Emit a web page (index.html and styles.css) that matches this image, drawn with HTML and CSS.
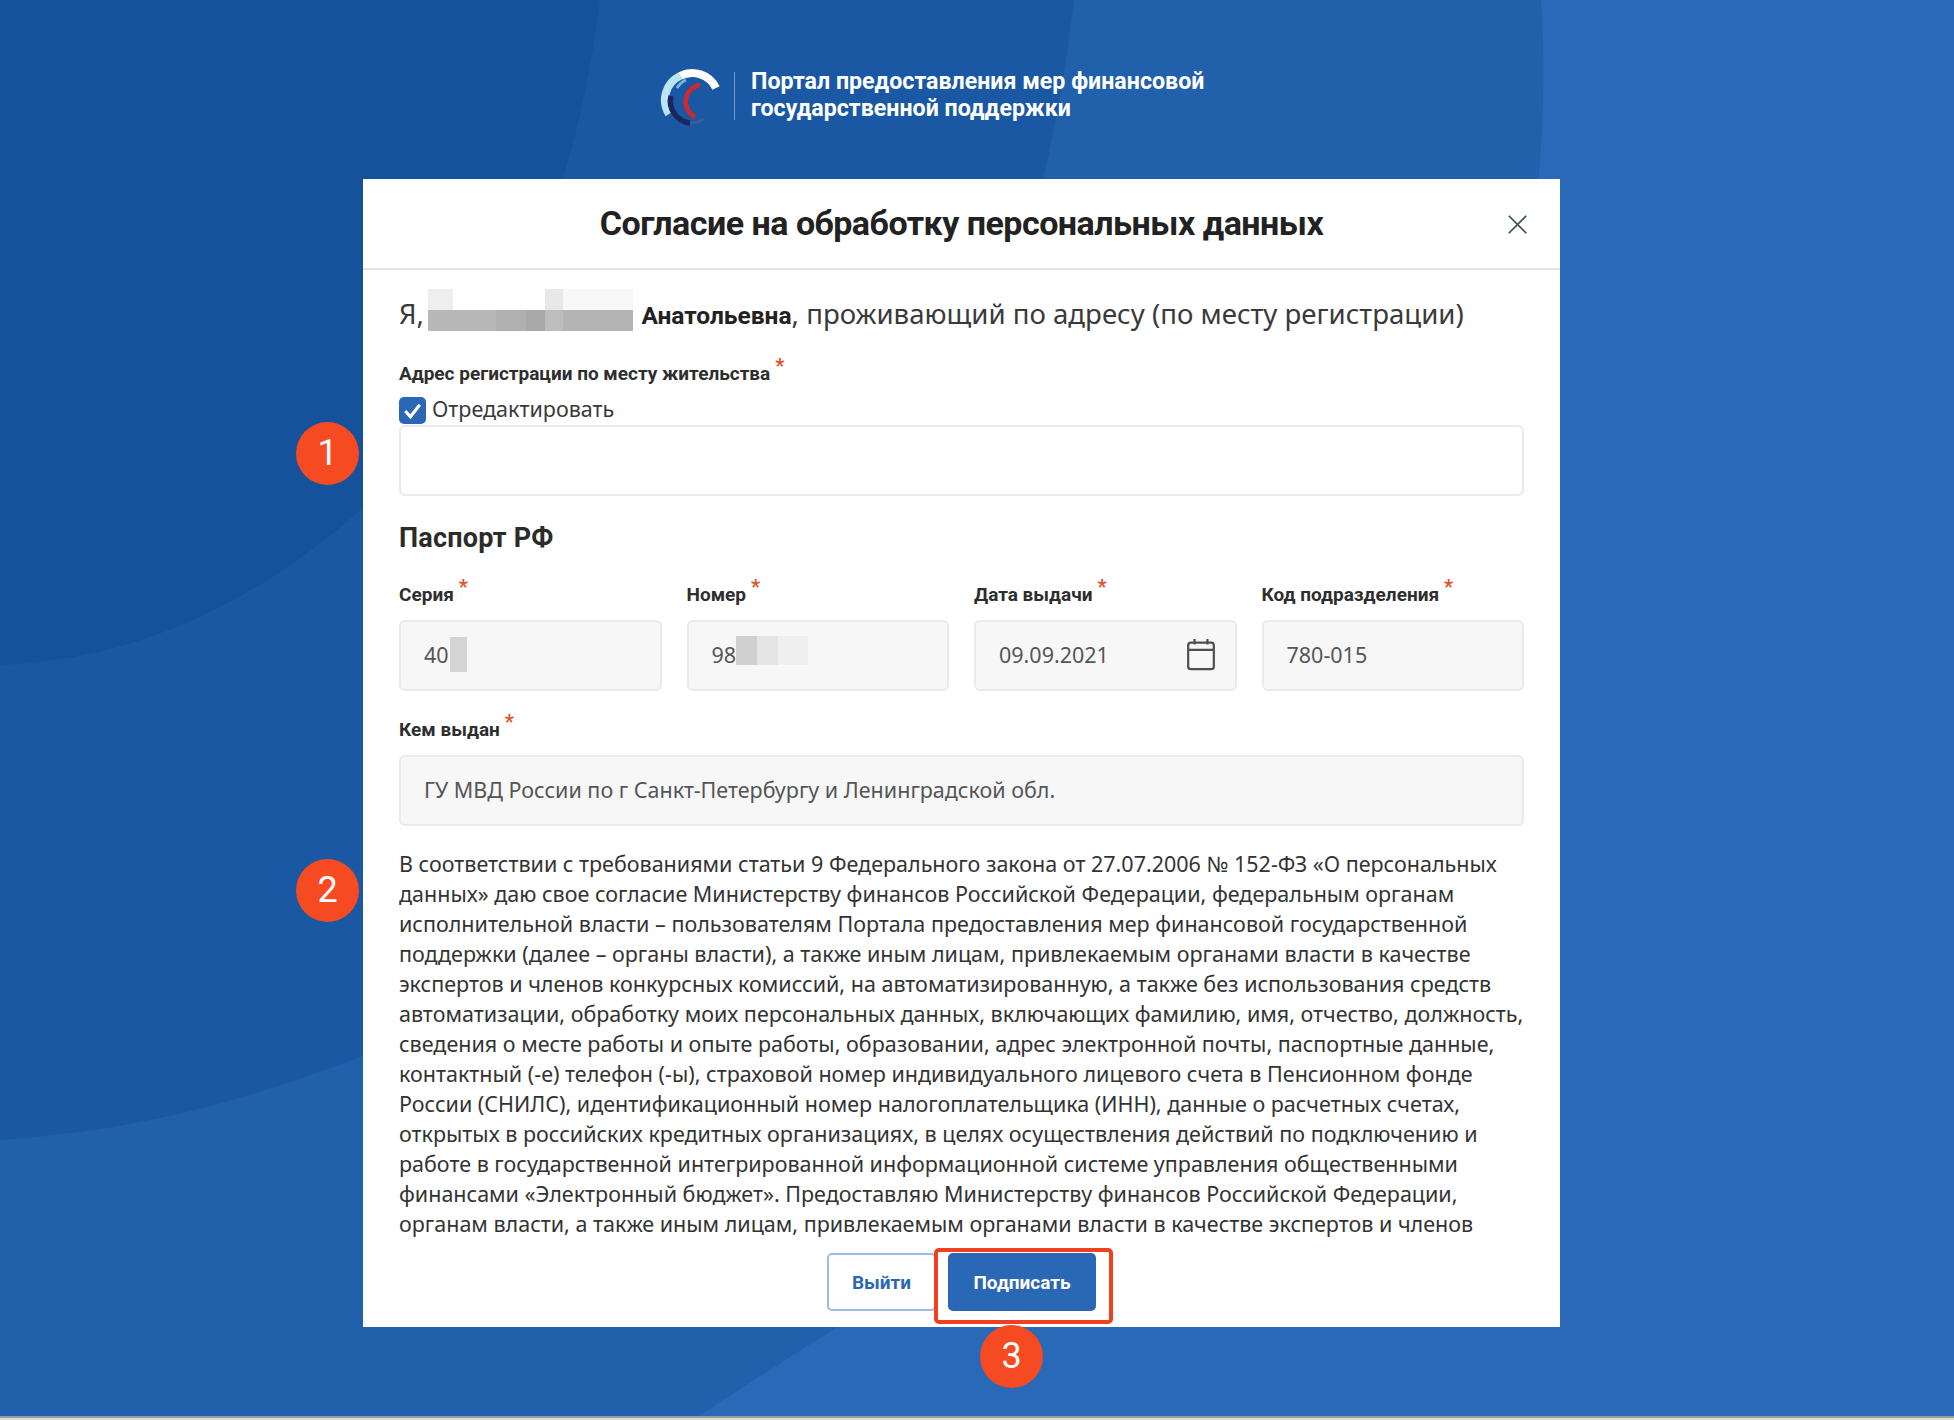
FILE: index.html
```html
<!DOCTYPE html>
<html lang="ru">
<head>
  <meta charset="utf-8">
  <title>Согласие на обработку персональных данных</title>
  <link rel="stylesheet" href="styles.css">
</head>
<body>

<svg class="bg" viewBox="0 0 1954 1420" preserveAspectRatio="none">
  <rect width="1954" height="1420" fill="#2a69b8"/>
  <path d="M0 0H1541C1575 500 1250 1050 837 1327L692 1420H0Z" fill="#2160ab"/>
  <path d="M0 0H1074C1010 550 700 930 363 1056C260 1095 150 1130 0 1140Z" fill="#1a58a3"/>
  <path d="M0 0H600C570 240 480 400 363 508C270 590 150 660 0 665Z" fill="#16519b"/>
</svg>

<header class="brand">
  <svg class="brand-logo" viewBox="10 10 64 60">
    <path d="M66 32A26.5 26.5 0 0 0 30 20" fill="none" stroke="#ffffff" stroke-width="8"/>
    <path d="M30 20A26.5 26.5 0 0 0 19 58" fill="none" stroke="#bde4f4" stroke-width="8"/>
    <path d="M36 24A20 20 0 0 0 27 32" fill="none" stroke="#6fb6e2" stroke-width="3"/>
    <path d="M50 29A17 17 0 0 0 45 61" fill="none" stroke="#d3272e" stroke-width="4.5"/>
    <path d="M21 40A22 22 0 0 0 40 67" fill="none" stroke="#1b2560" stroke-width="5.5"/>
    <path d="M40 67A24 24 0 0 0 54 63" fill="none" stroke="#3f5a95" stroke-width="3"/>
  </svg>
  <span class="brand-sep"></span>
  <div class="brand-text">Портал предоставления мер финансовой<br>государственной поддержки</div>
</header>

<main class="modal">
  <div class="modal-head">
    <h1>Согласие на обработку персональных данных</h1>
    <svg class="close" viewBox="0 0 24 24"><path d="M2 2L22 22M22 2L2 22" fill="none" stroke="#35505f" stroke-width="2"/></svg>
  </div>

  <div class="modal-body">
    <p class="intro">Я, <span class="blur-name"></span> <b>Анатольевна</b>, проживающий по адресу (по месту регистрации)</p>

    <label class="field-label address-label">Адрес регистрации по месту жительства<i>*</i></label>
    <div class="check-row">
      <span class="checkbox"><svg viewBox="0 0 26 26"><path d="M6 13.5L11 19L20 7.5" fill="none" stroke="#fff" stroke-width="3"/></svg></span>
      <span class="check-text">Отредактировать</span>
    </div>
    <div class="input input-white"></div>

    <h2>Паспорт РФ</h2>

    <div class="passport-grid">
      <div>
        <label class="field-label">Серия<i>*</i></label>
        <div class="input">40<span class="blur-digits short"></span></div>
      </div>
      <div>
        <label class="field-label">Номер<i>*</i></label>
        <div class="input">98<span class="blur-digits long"></span></div>
      </div>
      <div>
        <label class="field-label">Дата выдачи<i>*</i></label>
        <div class="input input-date">09.09.2021
          <svg class="calendar" viewBox="0 0 32 36">
            <rect x="2" y="5" width="28" height="29" rx="3" fill="none" stroke="#4f4f4f" stroke-width="2.4"/>
            <path d="M2 13H30M9 1V7M23 1V7" fill="none" stroke="#4f4f4f" stroke-width="2.4"/>
          </svg>
        </div>
      </div>
      <div>
        <label class="field-label">Код подразделения<i>*</i></label>
        <div class="input">780-015</div>
      </div>
    </div>

    <label class="field-label issued-label">Кем выдан<i>*</i></label>
    <div class="input">ГУ МВД России по г Санкт-Петербургу и Ленинградской обл.</div>

    <div class="consent">
      В соответствии с требованиями статьи 9 Федерального закона от 27.07.2006 № 152-ФЗ «О персональных<br>
      данных» даю свое согласие Министерству финансов Российской Федерации, федеральным органам<br>
      исполнительной власти – пользователям Портала предоставления мер финансовой государственной<br>
      поддержки (далее – органы власти), а также иным лицам, привлекаемым органами власти в качестве<br>
      экспертов и членов конкурсных комиссий, на автоматизированную, а также без использования средств<br>
      автоматизации, обработку моих персональных данных, включающих фамилию, имя, отчество, должность,<br>
      сведения о месте работы и опыте работы, образовании, адрес электронной почты, паспортные данные,<br>
      контактный (-е) телефон (-ы), страховой номер индивидуального лицевого счета в Пенсионном фонде<br>
      России (СНИЛС), идентификационный номер налогоплательщика (ИНН), данные о расчетных счетах,<br>
      открытых в российских кредитных организациях, в целях осуществления действий по подключению и<br>
      работе в государственной интегрированной информационной системе управления общественными<br>
      финансами «Электронный бюджет». Предоставляю Министерству финансов Российской Федерации,<br>
      органам власти, а также иным лицам, привлекаемым органами власти в качестве экспертов и членов
    </div>

    <div class="actions">
      <button type="button" class="btn btn-outline">Выйти</button>
      <button type="button" class="btn btn-primary">Подписать</button>
    </div>
  </div>
</main>

<div class="bottom-line"></div>

<!-- annotation marks lying over the page -->
<span class="mark mark-1">1</span>
<span class="mark mark-2">2</span>
<span class="mark mark-3">3</span>
<span class="mark-frame"></span>

</body>
</html>
```

FILE: styles.css
```css
html, body {
  margin: 0;
  height: 100%;
}
body {
  position: relative;
  width: 1954px;
  height: 1420px;
  overflow: hidden;
  font-family: "Noto Sans", Arial, sans-serif;
  color: #2b2b2b;
  background-color: #2a69b8;
}
.bg {
  position: absolute;
  left: 0;
  top: 0;
  width: 1954px;
  height: 1420px;
}
.bottom-line {
  position: absolute;
  left: 0;
  right: 0;
  bottom: 0;
  height: 4px;
  box-sizing: border-box;
  border-top: 2px solid #9a9a9a;
  background-color: #dddddd;
}

.brand {
  position: relative;
  display: flex;
  align-items: center;
  height: 179px;
  padding-left: 660px;
  box-sizing: border-box;
  padding-top: 12px;
}
.brand-logo {
  width: 64px;
  height: 60px;
}
.brand-sep {
  width: 1px;
  height: 48px;
  margin: 0 16px 0 10px;
  background-color: rgba(255, 255, 255, 0.4);
}
.brand-text {
  margin-top: -1px;
  color: #fff;
  font-family: Roboto, Arial, sans-serif;
  font-size: 23.2px;
  font-weight: 700;
  line-height: 27px;
  white-space: nowrap;
}

.modal {
  position: relative;
  width: 1197px;
  height: 1148px;
  margin-left: 363px;
  background-color: #fff;
}
.modal-head {
  display: flex;
  align-items: center;
  justify-content: center;
  position: relative;
  height: 91px;
  padding-bottom: 2px;
  border-bottom: 2px solid #e3e7ec;
  box-sizing: border-box;
}
.modal-head h1 {
  margin: 0;
  font-family: Roboto, Arial, sans-serif;
  font-size: 34px;
  font-weight: 700;
  letter-spacing: -0.5px;
  color: #222;
}
.close {
  position: absolute;
  right: 32px;
  top: 35px;
  width: 21px;
  height: 21px;
}
.modal-body {
  padding: 0 36px;
}
.intro {
  margin: 19px 0 0;
  height: 42px;
  line-height: 49px;
  font-size: 27.6px;
  color: #3a3a3a;
  white-space: nowrap;
}
.intro b {
  margin-left: 1px;
  font-family: Roboto, Arial, sans-serif;
  font-size: 24.5px;
  color: #222;
}
.blur-name {
  display: inline-block;
  vertical-align: top;
  width: 205px;
  height: 42px;
  margin-left: -3px;
  background:
    linear-gradient(90deg, #eeeeee 0 12%, #ffffff 12% 57%, #e8e8e8 57% 66%, #f8f8f8 66% 100%) top / 100% 50% no-repeat,
    linear-gradient(90deg, #b8b8b8 0 33%, #b0b0b0 33% 48%, #a9a9a9 48% 57%, #bdbdbd 57% 66%, #b4b4b4 66% 100%) bottom / 100% 50% no-repeat;
}
.field-label {
  display: block;
  font-family: Roboto, Arial, sans-serif;
  font-size: 19px;
  font-weight: 700;
  color: #2e2e2e;
  line-height: 24px;
}
.field-label i {
  position: relative;
  top: -7px;
  margin-left: 5px;
  font-style: normal;
  font-weight: 700;
  font-size: 20px;
  line-height: 0;
  color: #e0522c;
}
.address-label {
  margin-top: 31px;
}
.check-row {
  display: flex;
  align-items: center;
  gap: 6px;
  height: 27px;
  margin-top: 11px;
  font-size: 21.5px;
  color: #3a3a3a;
}
.check-text {
  margin-bottom: 5px;
}
.checkbox {
  width: 27px;
  height: 27px;
  border-radius: 5px;
  background-color: #2a67b5;
}
.checkbox svg {
  display: block;
}
.input {
  display: flex;
  align-items: center;
  height: 71px;
  box-sizing: border-box;
  padding: 0 23px 2px;
  border: 2px solid #e8eaee;
  border-radius: 6px;
  background-color: #f7f7f8;
  font-size: 21.5px;
  color: #555;
}
.input-white {
  margin-top: 1px;
  background-color: #fff;
}
.input-date {
  justify-content: space-between;
  padding-right: 19px;
}
.calendar {
  width: 30px;
  height: 33px;
}
.blur-digits {
  display: inline-block;
}
.blur-digits.short {
  width: 17px;
  height: 35px;
  margin-left: 1px;
  background-color: #d4d4d4;
}
.blur-digits.long {
  width: 72px;
  height: 29px;
  margin-bottom: 8px;
  background: linear-gradient(90deg, #cfcfcf 0 29%, #e4e4e4 29% 58%, #efefef 58% 100%);
}
h2 {
  margin: 24px 0 0;
  height: 36px;
  line-height: 36px;
  font-family: Roboto, Arial, sans-serif;
  font-size: 27px;
  font-weight: 700;
  letter-spacing: 0.2px;
  color: #2b2b2b;
}
.passport-grid {
  display: grid;
  grid-template-columns: repeat(4, 1fr);
  gap: 25px;
  margin-top: 27px;
}
.passport-grid .field-label {
  margin-bottom: 13px;
}
.issued-label {
  margin: 27px 0 13px;
}
.consent {
  margin: 23px -20px 0 0;
  height: 390px;
  overflow: hidden;
  font-size: 21.5px;
  line-height: 30px;
  color: #333;
  white-space: nowrap;
}
.actions {
  display: flex;
  justify-content: center;
  gap: 12px;
  margin-top: 14px;
}
.btn {
  height: 58px;
  box-sizing: border-box;
  border-radius: 5px;
  font-family: Roboto, Arial, sans-serif;
  font-size: 19px;
  font-weight: 700;
}
.btn-outline {
  width: 109px;
  border: 2px solid #9dbce2;
  background-color: #fff;
  color: #2a67b5;
}
.btn-primary {
  width: 148px;
  border: none;
  background-color: #2a67b5;
  color: #fff;
}

.mark {
  position: absolute;
  width: 63px;
  height: 63px;
  border-radius: 50%;
  background-color: #f54a22;
  color: #fff;
  font-family: Roboto, Arial, sans-serif;
  font-size: 36px;
  line-height: 63px;
  text-align: center;
}
.mark-1 { left: 296px; top: 422px; }
.mark-2 { left: 296px; top: 859px; }
.mark-3 { left: 980px; top: 1325px; }
.mark-frame {
  position: absolute;
  left: 934px;
  top: 1248px;
  width: 179px;
  height: 76px;
  box-sizing: border-box;
  border: 4px solid #f0401f;
  border-radius: 5px;
}
```
